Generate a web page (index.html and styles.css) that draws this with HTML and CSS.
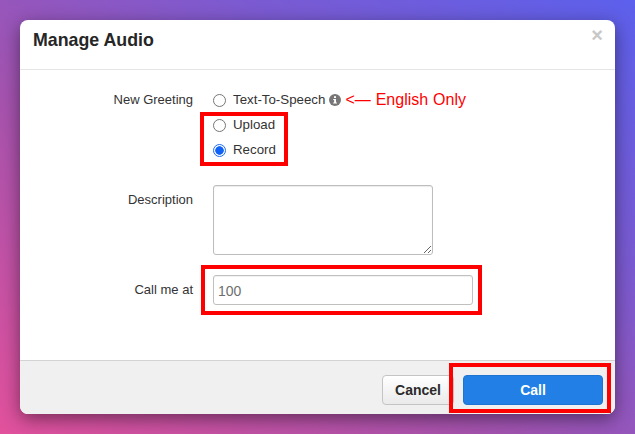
FILE: index.html
```html
<!DOCTYPE html>
<html lang="en">
<head>
<meta charset="utf-8">
<title>Manage Audio</title>
<link rel="stylesheet" href="styles.css">
</head>
<body>
<div class="modal">
  <header class="modal-header">
    <h1 class="modal-title">Manage Audio</h1>
    <span class="close">×</span>
  </header>
  <form class="modal-body">
    <div class="row row-greeting">
      <label class="row-label">New Greeting</label>
      <div class="options">
        <label class="option"><input type="radio" name="g" class="radio"><span>Text-To-Speech</span>
          <svg class="info" width="12" height="12" viewBox="0 0 12 12"><circle cx="6" cy="6" r="6" fill="#777"/><rect x="5" y="2.2" width="2" height="1.8" fill="#fff"/><path d="M4.2 5h2.8v3.4h.9v1H4.2v-1h.9V6H4.2z" fill="#fff"/></svg>
          <span class="note">&lt;— English Only</span>
        </label>
        <label class="option"><input type="radio" name="g" class="radio"><span>Upload</span></label>
        <label class="option"><input type="radio" name="g" class="radio" checked><span>Record</span></label>
      </div>
    </div>
    <div class="row row-description">
      <label class="row-label">Description</label>
      <textarea class="textarea"></textarea>
    </div>
    <div class="row row-call">
      <label class="row-label">Call me at</label>
      <input class="input" type="text" value="100">
    </div>
  </form>
  <footer class="modal-footer">
    <button type="button" class="btn btn-cancel">Cancel</button>
    <button type="button" class="btn btn-call">Call</button>
  </footer>
  <div class="mark mark-radios"></div>
  <div class="mark mark-input"></div>
  <div class="mark mark-call"></div>
</div>
</body>
</html>
```
FILE: styles.css
```css
* { box-sizing: border-box; }
html, body { height: 100%; }
body {
  margin: 0;
  padding: 20px;
  overflow: hidden;
  font-family: "Liberation Sans", Arial, sans-serif;
  font-size: 13px;
  color: #333;
  background:
    linear-gradient(35deg, #e2519c 0%, #a653ae 38%, #7c5ad0 68%, #5c60ec 100%);
}
.modal {
  position: relative;
  display: flex;
  flex-direction: column;
  width: 595px;
  height: 394px;
  background: #fff;
  border-radius: 8px;
  box-shadow: 0 5px 18px rgba(0, 0, 0, 0.45);
}
.modal-header {
  display: flex;
  justify-content: space-between;
  height: 50px;
  padding: 10px 12px 0 13px;
  border-bottom: 1px solid #e5e5e5;
}
.modal-title {
  margin: 0;
  font-size: 17.8px;
  line-height: 20px;
  font-weight: 700;
  color: #262626;
}
.close {
  font-size: 20px;
  line-height: 10px;
  font-weight: 700;
  color: #c8c8c8;
}
.modal-body {
  flex: 1;
  padding: 22px 0 0;
}
.row {
  display: grid;
  grid-template-columns: 173px auto;
  column-gap: 20px;
  justify-content: start;
}
.row-label {
  text-align: right;
  line-height: 16px;
}
.options {
  display: flex;
  flex-direction: column;
  gap: 9px;
  font-size: 13.3px;
}
.option {
  display: flex;
  align-items: center;
  height: 16px;
  line-height: 16px;
}
.radio {
  appearance: none;
  width: 13px;
  height: 13px;
  margin: 1px 7px 0 0;
  border: 1px solid #767676;
  border-radius: 50%;
  background: #fff;
}
.radio:checked {
  border: 1px solid #1a6cf0;
  background: radial-gradient(circle, #0f62f5 0 3.9px, #fff 4.6px);
}
.info { margin-left: 4px; }
.note {
  margin-left: 4px;
  font-size: 16px;
  word-spacing: 0.5px;
  color: #f00;
}
.row-description { margin-top: 27px; }
.row-description .row-label { padding-top: 7px; }
.textarea {
  display: block;
  width: 220px;
  height: 70px;
  margin: 0;
  border: 1px solid #bdbdbd;
  border-radius: 3px;
  background: #fff;
  box-shadow: inset 0 1px 1px rgba(0, 0, 0, 0.08);
  outline: none;
}
.row-call { margin-top: 20px; align-items: start; }
.row-call .row-label { padding-top: 7px; }
.input {
  display: block;
  width: 260px;
  height: 30px;
  padding: 1px 4px 0;
  border: 1px solid #c0c0c0;
  border-radius: 3px;
  background: #fff;
  font: 14px "Liberation Sans", Arial, sans-serif;
  color: #6e6e6e;
  box-shadow: inset 0 1px 1px rgba(0, 0, 0, 0.06);
  outline: none;
}
.modal-footer {
  display: flex;
  justify-content: flex-end;
  gap: 9px;
  height: 54px;
  padding: 14px 12px 0 0;
  background: #f0f0f0;
  border-top: 1px solid #d3d3d3;
  border-radius: 0 0 8px 8px;
}
.btn {
  height: 30px;
  margin: 0;
  border-radius: 4px;
  font: 700 14px "Liberation Sans", Arial, sans-serif;
  padding: 0;
}
.btn-cancel {
  width: 72px;
  color: #2b2b2b;
  background: linear-gradient(#fff, #eaeaea);
  border: 1px solid #c4c4c4;
}
.btn-call {
  width: 140px;
  color: #fff;
  background: #217fe6;
  border: 1px solid #1f74d2;
}
.mark {
  position: absolute;
  border: 4px solid #f00;
}
.mark-radios { left: 180px; top: 92px; width: 88px; height: 54px; }
.mark-input { left: 181px; top: 245px; width: 281px; height: 50px; }
.mark-call { left: 429px; top: 343px; width: 162px; height: 50px; }
```
